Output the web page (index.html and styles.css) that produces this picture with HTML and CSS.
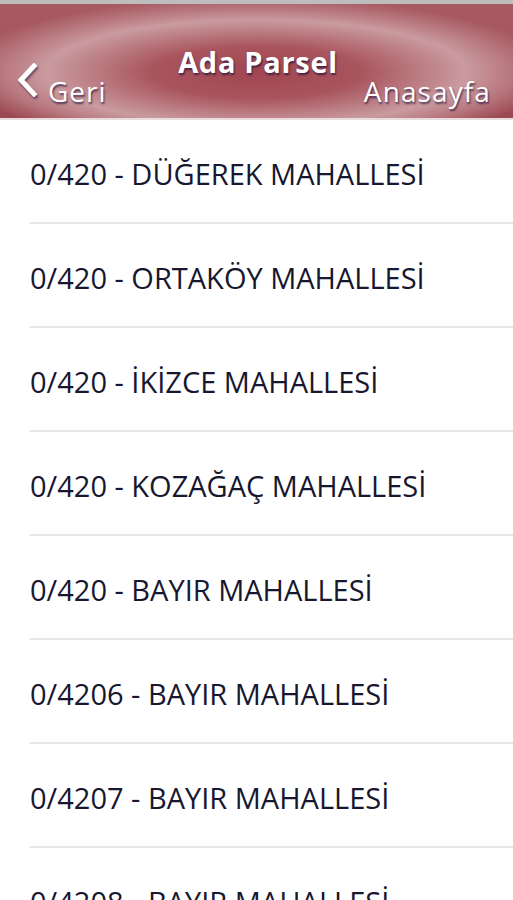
FILE: index.html
```html
<!DOCTYPE html>
<html lang="tr">
<head>
<meta charset="utf-8">
<link rel="stylesheet" href="styles.css">
</head>
<body>
<div class="topstrip"></div>
<header class="bar">
  <a class="back">
    <svg class="chev" width="24" height="34" viewBox="0 0 24 34"><path d="M18 3 L5 17 L18 31" fill="none" stroke="#fff" stroke-width="5" stroke-linecap="square"/></svg>
    <span class="back-label">Geri</span>
  </a>
  <h1 class="title">Ada Parsel</h1>
  <a class="home">Anasayfa</a>
</header>
<ul class="list">
  <li class="row">0/420 - DÜĞEREK MAHALLESİ</li>
  <li class="row">0/420 - ORTAKÖY MAHALLESİ</li>
  <li class="row">0/420 - İKİZCE MAHALLESİ</li>
  <li class="row">0/420 - KOZAĞAÇ MAHALLESİ</li>
  <li class="row">0/420 - BAYIR MAHALLESİ</li>
  <li class="row">0/4206 - BAYIR MAHALLESİ</li>
  <li class="row">0/4207 - BAYIR MAHALLESİ</li>
  <li class="row">0/4208 - BAYIR MAHALLESİ</li>
</ul>
</body>
</html>
```
FILE: styles.css
```css
html, body {
  margin: 0;
  padding: 0;
  background: #fff;
  overflow: hidden;
  height: 900px;
}
body {
  font-family: "Open Sans", "Noto Sans", sans-serif;
}
.topstrip {
  height: 4px;
  background: #bdbdbd;
}
.bar {
  height: 116px;
  box-sizing: border-box;
  padding: 0 16px;
  display: grid;
  grid-template-columns: 1fr auto 1fr;
  align-items: start;
  background:
    radial-gradient(ellipse 300px 75px at 50% 60%, #a04650 0%, #a9555e 35%, #c99b9f 70%, #b8777e 85%, rgba(168,84,92,0) 100%),
    linear-gradient(#a85a62, #a3515a 60%, #9c4852);
  border-bottom: 2px solid #e8dcdd;
  color: #fff;
  text-shadow: 1px 2px 2px rgba(40, 20, 60, 0.75);
}
.title {
  margin: 43px 0 0 3px;
  text-align: center;
  font-size: 29px;
  letter-spacing: 0.7px;
  font-weight: 700;
  line-height: 1;
}
.back {
  margin-top: 59px;
  display: flex;
  align-items: flex-start;
  gap: 8px;
  justify-self: start;
}
.chev {
  display: block;
  filter: drop-shadow(1px 2px 1px rgba(40,20,60,0.6));
}
.back-label {
  margin-top: 14px;
  font-size: 28px;
  letter-spacing: 1px;
  line-height: 1;
}
.home {
  margin-top: 73px;
  margin-right: 6px;
  justify-self: end;
  font-size: 28px;
  letter-spacing: 1.1px;
  line-height: 1;
}
.list {
  list-style: none;
  margin: 0;
  padding: 0 0 0 30px;
}
.row {
  height: 104px;
  box-sizing: border-box;
  border-bottom: 2px solid #e6e6e6;
  display: flex;
  align-items: center;
  padding-top: 4px;
  font-size: 29px;
  font-weight: 500;
  letter-spacing: 0;
  color: #17172f;
  white-space: nowrap;
}
```
